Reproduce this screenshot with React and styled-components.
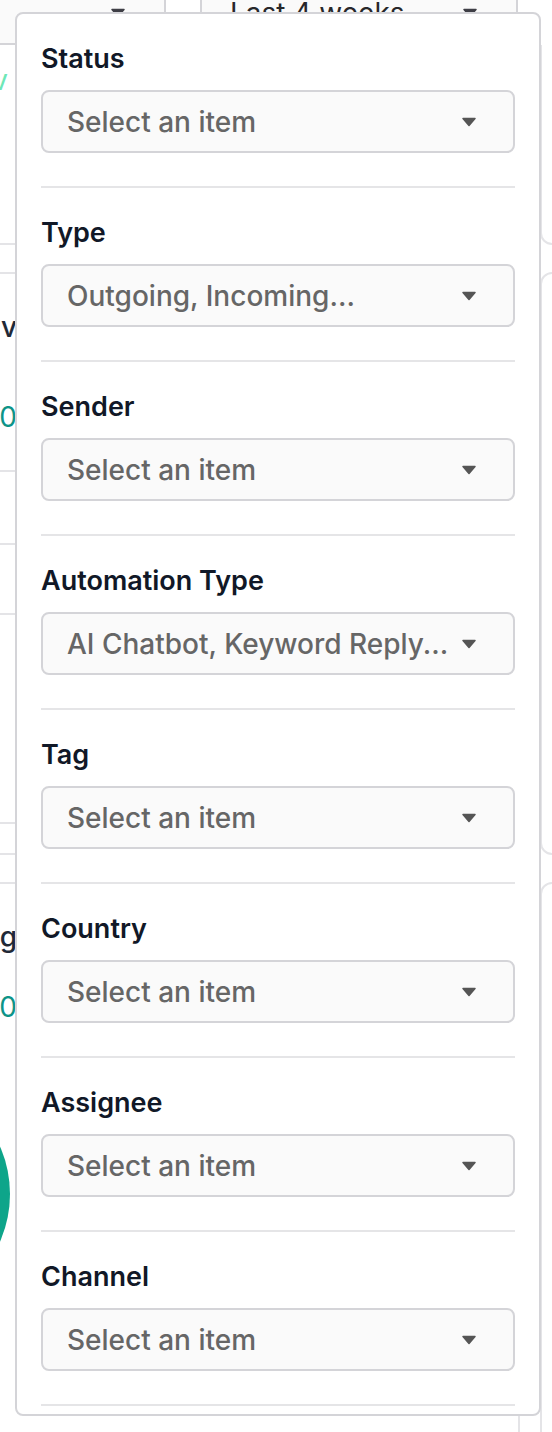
import React from "react"
import styled, { createGlobalStyle } from "styled-components"

const GlobalStyle = createGlobalStyle`
  html, body {
    margin: 0;
    padding: 0;
    background: #ffffff;
  }
  body {
    font-family: Inter, "Noto Sans", "Liberation Sans", sans-serif;
    -webkit-font-smoothing: antialiased;
  }
`

const Page = styled.div`
  position: relative;
  width: 552px;
  height: 1432px;
  overflow: hidden;
  background: #ffffff;
`

// ---- background dashboard (mostly covered by the filter panel) ----

const FilterBar = styled.div`
  display: flex;
  gap: 34px;
  margin: -20px 0 0 -20px;
`

const BgSelect = styled.div`
  box-sizing: border-box;
  flex: none;
  width: ${(p) => p.$width}px;
  height: 65px;
  display: flex;
  align-items: center;
  gap: 12px;
  padding: 0 38px 0 28px;
  background: #fafafa;
  border: 2px solid #d4d4d8;
  border-radius: 8px;
  font-size: 28px;
  color: #27272a;
`

const BgSelectText = styled.span`
  flex: 1;
  white-space: nowrap;
`

const BgGrid = styled.div`
  display: grid;
  grid-template-columns: 560px 320px;
  grid-template-rows: 200px 583px 600px;
  column-gap: 20px;
  row-gap: 27px;
  margin-left: -40px;
`

const Card = styled.div`
  box-sizing: border-box;
  background: #ffffff;
  border: 2px solid #e4e4e7;
  border-top-width: ${(p) => (p.$flatTop ? 0 : 2)}px;
  border-radius: ${(p) => (p.$flatTop ? "0 0 12px 12px" : "12px")};
  display: flex;
  flex-direction: column;
  overflow: hidden;
`

const Peek = styled.div`
  display: flex;
  justify-content: flex-end;
  width: 55px;
  margin-top: ${(p) => p.$top}px;
  font-size: 28px;
  line-height: 34px;
  font-weight: ${(p) => p.$weight || 400};
  color: ${(p) => p.$color};
  white-space: nowrap;
`

const CardRule = styled.div`
  height: 2px;
  background: #e4e4e7;
  margin-top: ${(p) => p.$top}px;
`

const Donut = styled.svg`
  display: block;
  margin: ${(p) => p.$top}px 0 0 -200px;
`

// ---- filter panel ----

const Panel = styled.div`
  position: absolute;
  left: 15px;
  top: 12px;
  box-sizing: border-box;
  width: 526px;
  height: 1404px;
  padding: 28px 24px 8px;
  background: #ffffff;
  border: 2px solid #d4d4d8;
  border-radius: 8px;
  display: flex;
  flex-direction: column;
  gap: 28px;
`

const Section = styled.div`
  display: flex;
  flex-direction: column;
`

const Label = styled.div`
  font-size: 27px;
  line-height: 34px;
  font-weight: 600;
  color: #111827;
  margin-bottom: 14px;
`

const SelectBox = styled.div`
  box-sizing: border-box;
  height: 63px;
  display: flex;
  align-items: center;
  gap: 12px;
  padding: 0 36px 0 24px;
  background: #fafafa;
  border: 2px solid #d4d4d8;
  border-radius: 8px;
  margin-bottom: 33px;
`

const SelectText = styled.span`
  flex: 1;
  font-size: 28px;
  font-weight: 500;
  color: #666666;
  white-space: nowrap;
  overflow: hidden;
`

const Divider = styled.div`
  height: 2px;
  background: #e5e5e7;
`

const Caret = ({ color = "#555555" }) => (
  <svg width="16" height="10" viewBox="0 0 16 10">
    <path d="M2 1.5h12L8 8.5z" fill={color} stroke={color} strokeWidth="1.5" strokeLinejoin="round" />
  </svg>
)

const filters = [
  { label: "Status", value: "Select an item" },
  { label: "Type", value: "Outgoing, Incoming..." },
  { label: "Sender", value: "Select an item" },
  { label: "Automation Type", value: "AI Chatbot, Keyword Reply..." },
  { label: "Tag", value: "Select an item" },
  { label: "Country", value: "Select an item" },
  { label: "Assignee", value: "Select an item" },
  { label: "Channel", value: "Select an item" },
]

export default function App() {
  return (
    <Page>
      <GlobalStyle />

      <FilterBar>
        <BgSelect $width={186}>
          <BgSelectText />
          <Caret color="#3f3f46" />
        </BgSelect>
        <BgSelect $width={318}>
          <BgSelectText>Last 4 weeks</BgSelectText>
          <Caret color="#3f3f46" />
        </BgSelect>
      </FilterBar>

      <BgGrid>
        <Card $flatTop>
          <Peek $top={18} $color="#6ee7b7" style={{ width: 46 }}>
            ↗ v
          </Peek>
        </Card>
        <Card $flatTop />

        <Card>
          <Peek $top={36} $weight={500} $color="#1f2937">
            Conv
          </Peek>
          <Peek $top={56} $color="#0d9488">
            1,20
          </Peek>
          <CardRule $top={36} />
          <CardRule $top={71} />
          <CardRule $top={68} />
          <CardRule $top={207} />
        </Card>
        <Card />

        <Card>
          <Peek $top={36} $weight={500} $color="#1f2937">
            Messag
          </Peek>
          <Peek $top={36} $color="#0d9488">
            1,00
          </Peek>
          <Donut $top={20} width="280" height="300" viewBox="0 0 280 300">
            <circle cx="130" cy="150" r="118" fill="#0ea58a" />
          </Donut>
        </Card>
        <Card />
      </BgGrid>

      <Panel>
        {filters.map((f) => (
          <Section key={f.label}>
            <Label>{f.label}</Label>
            <SelectBox>
              <SelectText>{f.value}</SelectText>
              <Caret />
            </SelectBox>
            <Divider />
          </Section>
        ))}
      </Panel>
    </Page>
  )
}
